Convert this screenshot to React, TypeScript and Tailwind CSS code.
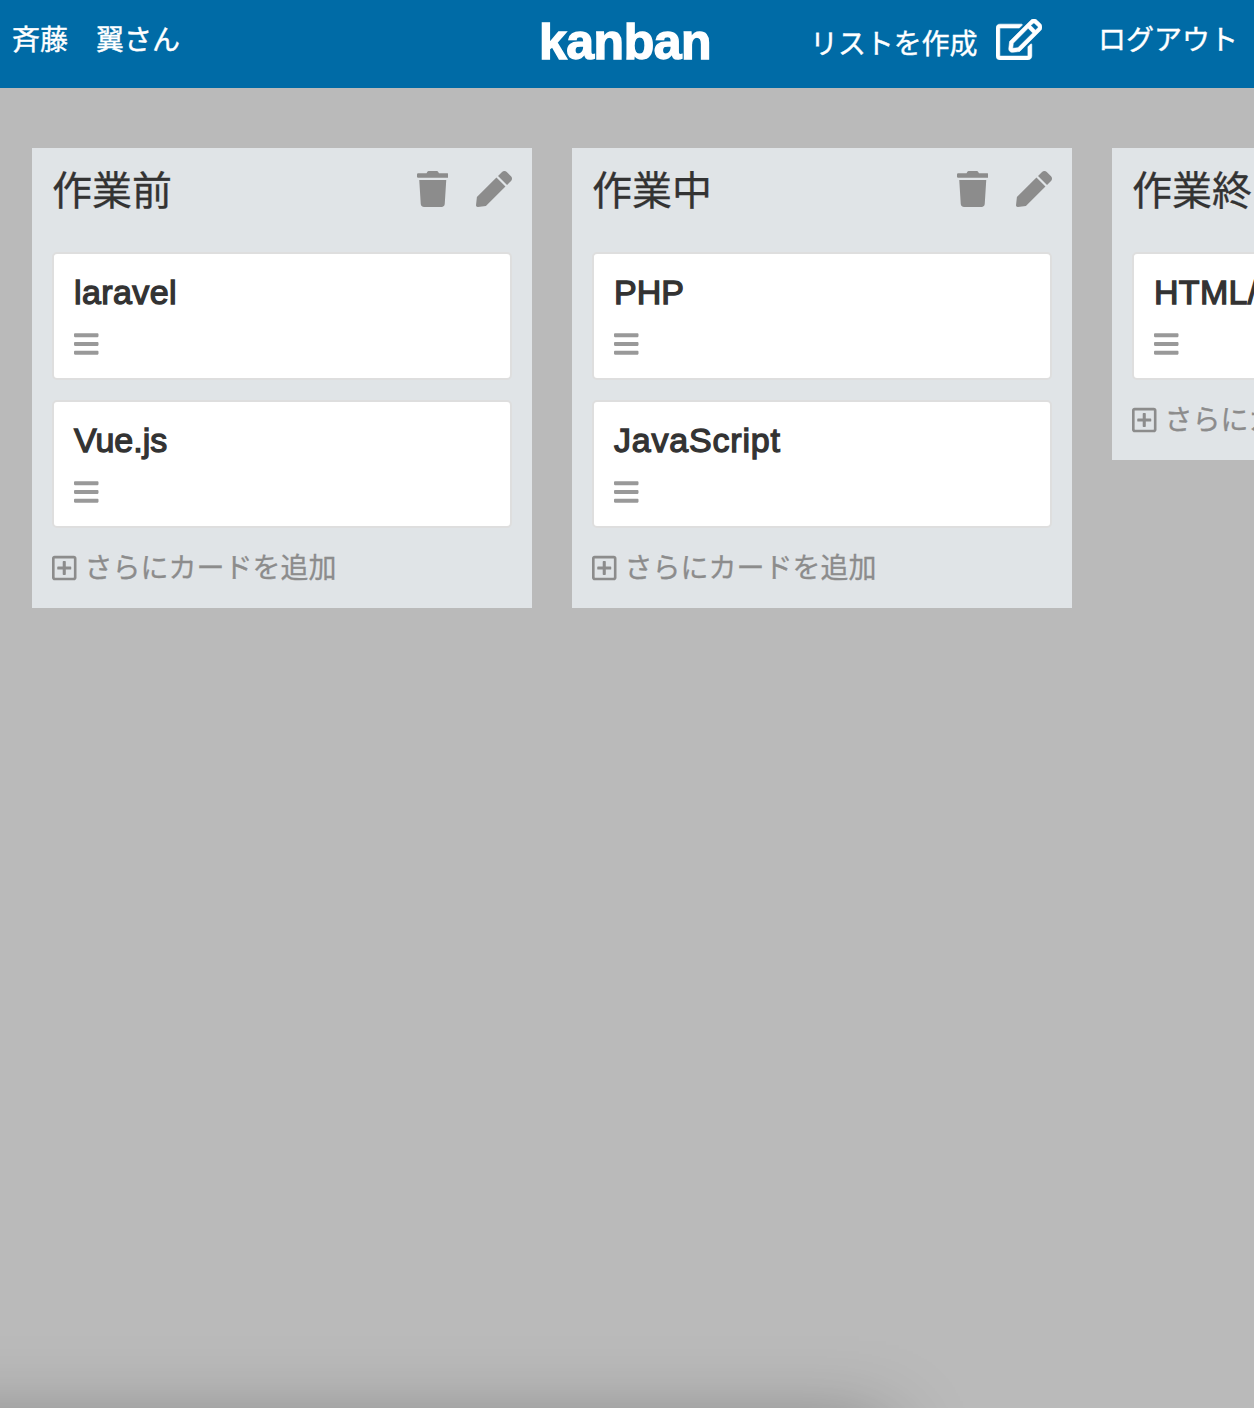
import React from "react";
import { FaBars, FaPen, FaRegEdit, FaRegPlusSquare, FaTrash } from "react-icons/fa";

type CardData = { name: string; tracking: string };
type List = { title: string; cards: CardData[] };

const lists: List[] = [
  {
    title: "作業前",
    cards: [
      { name: "laravel", tracking: "tracking-[0.4px]" },
      { name: "Vue.js", tracking: "tracking-normal" },
    ],
  },
  {
    title: "作業中",
    cards: [
      { name: "PHP", tracking: "tracking-normal" },
      { name: "JavaScript", tracking: "tracking-[0.8px]" },
    ],
  },
  { title: "作業終了", cards: [{ name: "HTML/CSS", tracking: "tracking-[0.3px]" }] },
];

function Card({ name, tracking }: CardData) {
  return (
    <div className="h-32 rounded-[5px] border-2 border-[#dedede] bg-white px-5 pt-[18px]">
      <div className={`h-10 text-[34px] leading-10 whitespace-nowrap [-webkit-text-stroke:1.3px_#333] ${tracking}`}>
        {name}
      </div>
      <FaBars className="mt-[17.5px] h-7 w-[24.5px] text-[#999]" />
    </div>
  );
}

function Column({ list }: { list: List }) {
  return (
    <section className="w-[500px] shrink-0 bg-[#e0e4e7] px-5 pb-[26px]">
      <div className="flex h-[104px] items-start justify-between">
        <h2 className="pt-[13px] text-[40px] leading-[60px] whitespace-nowrap [-webkit-text-stroke:0.3px_#333]">
          {list.title}
        </h2>
        <div className="flex gap-7 pt-[22.5px] text-[#8c8c8c]">
          <FaTrash className="h-9 w-[31.5px]" />
          <FaPen className="h-9 w-9" />
        </div>
      </div>
      <div className="flex flex-col gap-5">
        {list.cards.map((card) => (
          <Card key={card.name} name={card.name} tracking={card.tracking} />
        ))}
      </div>
      <button className="mt-[25px] flex h-[29px] items-center text-[28px] leading-7 whitespace-nowrap text-[#8c8c8c]">
        <FaRegPlusSquare className="mr-2 h-7 w-[24.5px] shrink-0" />
        <span className="pt-[3px] [-webkit-text-stroke:0.3px_#8c8c8c]">さらにカードを追加</span>
      </button>
    </section>
  );
}

export default function App() {
  return (
    <div className="relative h-[1408px] w-[1254px] overflow-hidden bg-[#bababa] font-['Liberation_Sans','Noto_Sans_CJK_JP',sans-serif] text-[#333]">
      <header className="flex h-[88px] items-start bg-[#006ba6] pl-3 text-[28px] leading-10 whitespace-nowrap text-white [-webkit-text-stroke:0.4px_#fff]">
        <div className="w-[527px] pt-[21px]">斉藤　翼さん</div>
        <h1 className="w-[271px] pt-3 text-[50px] leading-[60px] font-bold tracking-[-0.5px] [-webkit-text-stroke:1.4px_#fff]">
          kanban
        </h1>
        <div className="flex w-[288px] tracking-[-0.1px]">
          <span className="w-[186px] pt-[25px]">リストを作成</span>
          <FaRegEdit className="mt-[18.5px] h-[41px] w-[46px] stroke-white stroke-[8]" />
        </div>
        <div className="pt-[21px]">ログアウト</div>
      </header>
      <main className="flex items-start gap-10 pt-[60px] pl-8">
        {lists.map((list) => (
          <Column key={list.title} list={list} />
        ))}
      </main>
      <div className="absolute top-[1428px] left-[-100px] h-[300px] w-[986px] shadow-[0_0_76px_rgba(0,0,0,0.36)]" />
    </div>
  );
}
